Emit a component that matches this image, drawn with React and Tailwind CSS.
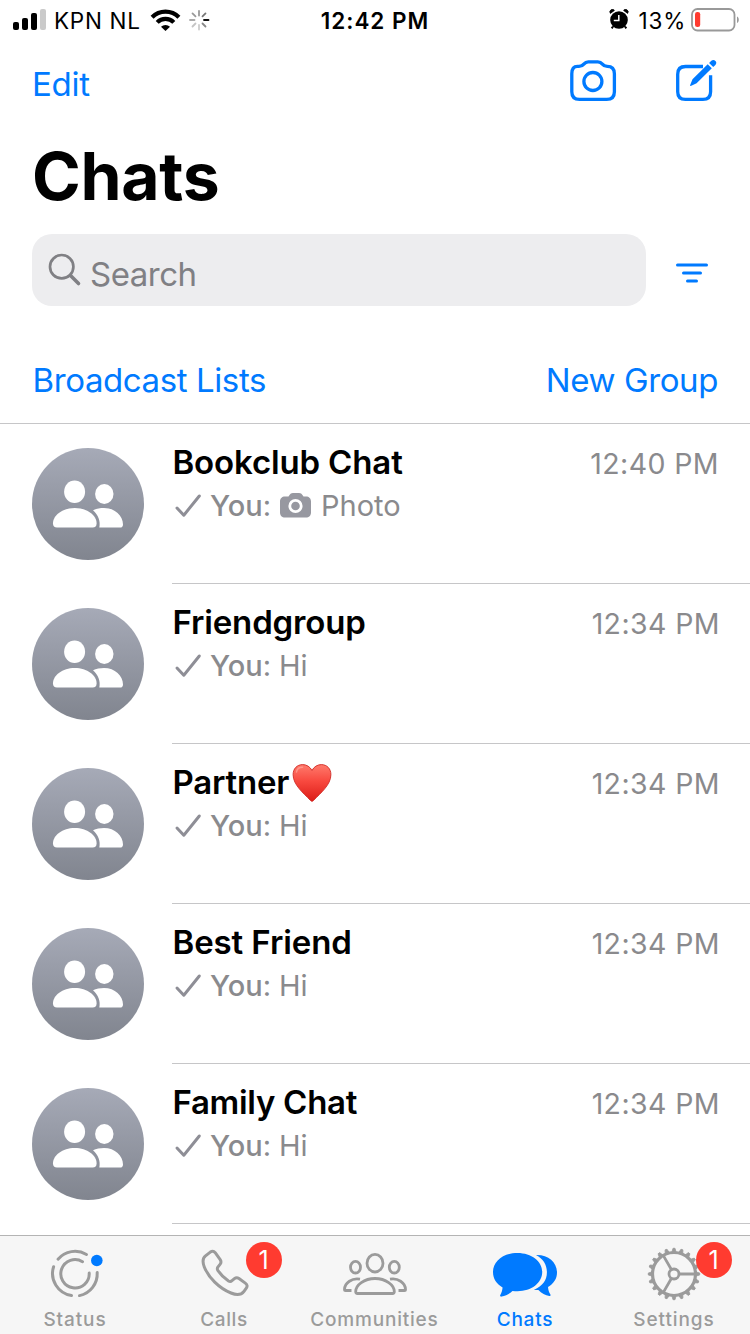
import React from "react";

const gray = "#9b9b9b";
const blue = "#007aff";

function StatusBar() {
  return (
    <div className="flex h-[40px] items-center pl-[12px] pr-[11px] text-[22.5px] leading-[41px] text-black">
      <div className="flex w-[280px] items-center">
        <svg className="shrink-0" width="34" height="22" viewBox="12 9 34 22">
          <rect x="13" y="22" width="6" height="8" rx="2" />
          <rect x="22" y="18" width="6" height="12" rx="2" />
          <rect x="31" y="13" width="6" height="17" rx="2" />
          <rect x="40" y="9" width="6" height="21" rx="2" fill="#cacaca" />
        </svg>
        <span className="ml-[8px] w-[89px] whitespace-nowrap tracking-[0.7px]">KPN NL</span>
        <svg className="ml-[7px] shrink-0" width="60" height="24" viewBox="150 8 60 24">
          <g fill="none" stroke="#000" strokeWidth="4.2">
            <path d="M152.100 17.200A18.800 18.800 0 0 1 178.900 17.200" />
            <path d="M157.200 22.400A11.600 11.600 0 0 1 173.800 22.400" />
          </g>
          <path d="M161 26.800a6.600 6.600 0 0 1 9 0l-4.500 4.200z" />
          <g strokeWidth="1.8" strokeLinecap="round">
            <path d="M199 11v4.500" stroke="#999" />
            <path d="M205.500 13.400l-3 3" stroke="#777" />
            <path d="M204 20h4.500" stroke="#111" />
            <path d="M202.500 23.500l3 3" stroke="#888" />
            <path d="M199 25v4.500" stroke="#ccc" />
            <path d="M192.500 26.500l3-3" stroke="#c4c4c4" />
            <path d="M190 20h4.500" stroke="#aaa" />
            <path d="M192.500 13.400l3 3" stroke="#999" />
          </g>
        </svg>
      </div>
      <span className="w-[166px] text-center font-semibold tracking-[1px]">12:42 PM</span>
      <div className="flex flex-1 items-center justify-end">
        <svg className="shrink-0" width="20" height="22" viewBox="609 9 20 22">
          <circle cx="619" cy="20" r="8.800" />
          <path d="M610.400 13.400a2.400 2.400 0 0 1 4-3zM627.600 13.400a2.400 2.400 0 0 0-4-3z" stroke="#000" strokeWidth="0.800" />
          <path d="M613 26.500l-1.300 1.800M625 26.500l1.300 1.800" stroke="#000" strokeWidth="2" />
          <path d="M618.800 15v5.500h-5" fill="none" stroke="#fff" strokeWidth="1.500" />
        </svg>
        <span className="ml-[9.500px] w-[48.500px] whitespace-nowrap tracking-[0.8px]">13%</span>
        <svg className="ml-[4px] shrink-0" width="48" height="24" viewBox="691 8 48 24">
          <rect x="692" y="9" width="42.500" height="21.500" rx="5.500" fill="none" stroke="#999" strokeWidth="1.800" />
          <path d="M737 16.500c2.400 1.200 2.400 5.300 0 6.500z" fill="#999" />
          <rect x="695" y="12" width="5.200" height="15" rx="2.300" fill="#ff3b30" />
        </svg>
      </div>
    </div>
  );
}

function NavIcons() {
  return (
    <svg width="150" height="46" viewBox="568 58 150 46" fill="none" stroke={blue} strokeWidth="3.3">
      <path d="M577.500 66.300H579c2.200 0 3.600-.7 4.800-2.200 1.300-1.600 2.500-2.300 4.500-2.300h9.600c2 0 3.200.7 4.500 2.300 1.200 1.500 2.600 2.200 4.800 2.200 4.700 0 7.200 2.800 7.200 7.400v18c0 5-2.700 7.700-7.700 7.700h-27.200c-5 0-7.700-2.700-7.700-7.700v-18c0-4.600 2-7.400 5.700-7.400z" />
      <circle cx="592.900" cy="81.500" r="9" />
      <path d="M703 66.500h-17.500c-5 0-7.800 2.700-7.800 7.700v17.500c0 5 2.700 7.700 7.700 7.700h17.500c5 0 7.700-2.700 7.700-7.700v-16.500" />
      <path fill={blue} stroke="none" d="M690.200 85l2.300-5.800 15.200-15 4.100 4.100-15.200 15-5.300 2.500c-.9.300-1.400-.1-1.100-.8zM709.100 63l2.200-2.200c2.800-2.700 6.800 1.300 4.100 4.100l-2.200 2.200z" />
    </svg>
  );
}

function Avatar() {
  return (
    <div className="mt-[24px] ml-[32px] size-[112px] shrink-0 rounded-full bg-linear-to-b from-[#a6aab7] to-[#81858f]">
      <svg width="112" height="112" viewBox="32 448 112 112" fill="#fff">
        <ellipse cx="74.600" cy="491.800" rx="10.500" ry="11.300" />
        <ellipse cx="104.300" cy="494" rx="9.200" ry="10" />
        <path d="M93 510.300c3.300-1.600 7-2.300 11-2.300 11 0 19 7.800 19 16.500 0 2-1 3.100-3 3.100H99.300c1.500-6.500-1.200-12.800-6.300-17.300z" />
        <path d="M53 523.300c0-8 9.300-15.300 21.800-15.300s21.800 7.300 21.800 15.300c0 2.900-1.300 4.300-4 4.300H57c-2.700 0-4-1.400-4-4.300z" />
      </svg>
    </div>
  );
}

function Heart() {
  return (
    <svg className="mt-[1px] ml-[3px] shrink-0" width="40" height="40" viewBox="0 0 40 40">
      <defs>
        <linearGradient id="heart" x1="0" y1="0" x2="0" y2="1">
          <stop offset="0" stopColor="#ff7a6c" />
          <stop offset="0.45" stopColor="#f8493f" />
          <stop offset="1" stopColor="#dc1c17" />
        </linearGradient>
      </defs>
      <path d="M20 7.500C21.800 3.800 25.500 1.600 29.300 1.600c5.800 0 9.600 4.200 9.600 10C38.900 22 28.500 30 21.500 37.500c-1 1.100-2 1.100-3 0C11.500 30 1.100 22 1.100 11.600c0-5.800 3.800-10 9.600-10C14.500 1.600 18.200 3.800 20 7.500z" fill="url(#heart)" stroke="#cf2a25" strokeWidth="0.900" />
      <path d="M4.500 9C5 6 7.500 4.200 10.500 4.200" fill="none" stroke="#ffb0a5" strokeWidth="1.500" strokeLinecap="round" opacity="0.6" />
    </svg>
  );
}

function ChatRow({ name, time, nameClass, heart, photo }) {
  return (
    <div className="flex h-[160px] shrink-0">
      <Avatar />
      <div className="ml-[28px] flex flex-1 border-b border-[#c6c6c8] pt-[18px]">
        <div className="flex-1">
          <div className="flex h-[40px] items-center pl-[0.500px]">
            <span className={"whitespace-nowrap text-[33px] leading-[40px] font-semibold text-black " + nameClass}>{name}</span>
            {heart && <Heart />}
          </div>
          <div className="mt-[2px] flex h-[44px] items-center text-[29px] leading-[44px] text-[#8a8a8d]">
            <svg className="ml-[2px] shrink-0" width="28" height="26" viewBox="174 493 28 26">
              <path d="M177 508l6.800 7.200L199.300 496" fill="none" stroke="#8e8e96" strokeWidth="3" strokeLinecap="round" strokeLinejoin="round" />
            </svg>
            <span className="ml-[8px] w-[69px] whitespace-nowrap"><span className="font-medium">You</span>:</span>
            {photo && (
              <svg className="mr-[10px] ml-[1px] shrink-0" width="31" height="26" viewBox="280 493 31 26">
                <path d="M285 496.500h3.500c1.500-2.500 2.500-3.500 4.500-3.500h6c2 0 3 1 4.500 3.500h2.500c3 0 5 2 5 5v11c0 3-2 5-5 5h-21c-3 0-5-2-5-5v-11c0-3 2-5 5-5z" fill="#9798a0" />
                <circle cx="295.500" cy="506" r="5.700" fill="#9798a0" stroke="#fff" strokeWidth="2.800" />
              </svg>
            )}
            <span className="whitespace-nowrap">{photo ? "Photo" : "Hi"}</span>
          </div>
        </div>
        <span className={"mt-[1px] h-[40px] whitespace-nowrap text-[28.5px] leading-[41px] tracking-[0.4px] text-[#8a8a8d] " + (photo ? "mr-[31px]" : "mr-[30px]")}>{time}</span>
      </div>
    </div>
  );
}

function Badge() {
  return (
    <span className="absolute top-[6px] left-[96px] flex size-[36px] items-center justify-center rounded-full bg-[#ff3b30] pr-[1px] text-[25px] leading-[36px] text-white">1</span>
  );
}

function Tab({ label, children, badge, active, labelClass }) {
  return (
    <div className={"relative flex w-[150px] shrink-0 flex-col items-center " + (active ? "text-[#007aff]" : "text-[#9b9b9b]")}>
      <svg width="150" height="72" viewBox="0 1236 150 72" fill="none">{children}</svg>
      <span className={"mt-[1px] whitespace-nowrap text-[19px] leading-[22px] font-medium " + labelClass}>{label}</span>
      {badge && <Badge />}
    </div>
  );
}

const teeth = Array.from({ length: 20 }, (_, i) => i * 18);

function TabBar() {
  return (
    <div className="flex h-[99px] shrink-0 border-t border-[#b4b4b4] bg-[#f6f6f6]">
      <Tab label="Status" labelClass="tracking-[0.9px]">
        <g stroke={gray} strokeWidth="3" strokeLinecap="round">
          <path d="M58 1259.200A22.300 22.300 0 0 1 86.500 1254.500" />
          <path d="M53.600 1266.800A22.300 22.300 0 0 0 71.500 1295.600" />
          <path d="M79.500 1295.600A22.300 22.300 0 0 0 97.200 1272.500" />
          <path d="M82.500 1261.700A14.200 14.200 0 1 0 89.200 1273" />
        </g>
        <circle cx="96.800" cy="1260.500" r="5.800" fill={blue} />
      </Tab>
      <Tab label="Calls" labelClass="mr-[2px] tracking-[0.6px]" badge>
        <path transform="translate(1.200 0.400)" d="M54.300 1255.500l4.800-3.800c1.800-1.200 3.600-1 4.900.6l5 7c1 1.500 1 3.200-.2 4.700l-2 2.500c-.8 1.100-.9 2.200-.2 3.400 3 4.500 6.500 7.900 10.700 10.700 1.200.7 2.500.6 3.500-.3l2.400-2c1.500-1.200 3-1.200 4.600-.2l6.300 4.600c2 1.400 2.300 3.200 1 5l-2.300 3.200c-2.700 3.600-7.500 4-13 1.700-12-4.800-22.500-15.500-26.700-26-1.900-4.900-1.400-9 1.200-11.100z" stroke={gray} strokeWidth="3" strokeLinejoin="round" />
      </Tab>
      <Tab label="Communities" labelClass="mr-[1px] tracking-[0.8px]">
        <g stroke={gray} strokeWidth="2.800">
          <ellipse cx="75" cy="1263.200" rx="8" ry="8.800" />
          <ellipse cx="55.500" cy="1267.200" rx="5" ry="5.800" />
          <ellipse cx="94.300" cy="1267.200" rx="5" ry="5.800" />
          <path d="M57.500 1293.500c-1.200 0-1.800-.8-1.800-2 0-6.500 8.500-13 19.300-13s19.300 6.500 19.300 13c0 1.200-.6 2-1.800 2z" />
          <path d="M60 1279.200c-8-1.500-15.200 3.500-15.500 10.200 0 .8.300 1.100 1.100 1.100H51.500M90 1279.200c8-1.500 15.200 3.500 15.500 10.200 0 .8-.3 1.100-1.100 1.100H98.500" />
        </g>
      </Tab>
      <Tab label="Chats" active labelClass="tracking-[0.8px]">
        <path d="M87 1255c11.500 0 20 7.500 20 17.500 0 6.200-3.300 11-9 14.500.2 3 1.200 5.500 2.400 7.500.5.900 0 1.600-1 1.400-4-.7-8-2.700-11-5.900-1.500.2-3 .1-4.500-.1 9-4.300 13-10 13-17.500 0-7.600-3.700-13.700-10.900-17.400z" fill={blue} />
        <path d="M67.500 1253c14 0 24.700 8.300 24.700 19 0 10.800-10.700 19.200-24.700 19.200-1.800 0-3.500-.1-5-.3-2.600 2.500-6.500 4.700-10.800 5.700-1.200.3-2-.5-1.400-1.500 1.300-2.400 2-4.700 2.300-7.600C46.500 1284 43 1278.800 43 1272c0-10.700 10.500-19 24.500-19z" fill={blue} />
      </Tab>
      <Tab label="Settings" labelClass="mr-[2px] tracking-[0.9px]" badge>
        <g stroke={gray}>
          <circle cx="74" cy="1274" r="21.500" strokeWidth="3.200" />
          <circle cx="74" cy="1274" r="5" strokeWidth="2.800" />
          <path d="M79 1274h16.500M71.500 1269.700l-8.300-14.300M71.500 1278.300l-8.300 14.300" strokeWidth="2.800" />
          {teeth.map((a) => (
            <path key={a} d="M95.500 1271.800l4.200 1.200v2l-4.200 1.200z" fill={gray} strokeWidth="0.800" transform={`rotate(${a} 74 1274)`} />
          ))}
        </g>
      </Tab>
    </div>
  );
}

const chats = [
  { name: "Bookclub Chat", time: "12:40 PM", nameClass: "tracking-[-0.15px]", photo: true },
  { name: "Friendgroup", time: "12:34 PM", nameClass: "tracking-[-0.15px]" },
  { name: "Partner", time: "12:34 PM", nameClass: "tracking-[-0.2px]", heart: true },
  { name: "Best Friend", time: "12:34 PM", nameClass: "tracking-[-0.1px]" },
  { name: "Family Chat", time: "12:34 PM", nameClass: "tracking-[-0.3px]" },
];

export default function App() {
  return (
    <div className="flex h-[1334px] w-[750px] flex-col overflow-hidden bg-white font-['Inter',sans-serif]">
      <StatusBar />
      <div className="flex h-[88px] shrink-0 items-center justify-between pr-[32px] pl-[32px]">
        <span className="text-[33px] leading-[40px] tracking-[-0.3px] text-[#007aff]">Edit</span>
        <div className="mt-[-6px]"><NavIcons /></div>
      </div>
      <h1 className="h-[96px] shrink-0 pl-[32px] text-[66px] leading-[96px] font-bold tracking-[-0.3px] text-black">Chats</h1>
      <div className="mt-[10px] flex h-[72px] shrink-0 items-center pl-[32px]">
        <div className="flex h-[72px] w-[614px] items-center rounded-[20px] bg-[#ededef] pl-[16px]">
          <svg className="shrink-0" width="34" height="34" viewBox="48 253 34 34" fill="none" stroke="#808084" strokeWidth="2.700">
            <circle cx="61.700" cy="266.700" r="11.700" />
            <path d="M70.500 275.500l8 8" strokeWidth="3.600" strokeLinecap="round" />
          </svg>
          <span className="mt-[8px] ml-[8px] text-[33px] leading-[40px] tracking-[-0.5px] text-[#808084]">Search</span>
        </div>
        <svg className="mt-[5px] ml-[28px]" width="36" height="26" viewBox="674 259 36 26" stroke={blue} strokeWidth="3" strokeLinecap="round">
          <path d="M677.500 264h29M683.500 272h17M687.500 280h9" />
        </svg>
      </div>
      <div className="flex h-[118px] shrink-0 items-start justify-between border-b border-[#c6c6c8] pt-[54px] pr-[32px] pl-[32.500px] text-[33px] leading-[40px] tracking-[-0.400px] text-[#007aff]">
        <span>Broadcast Lists</span>
        <span>New Group</span>
      </div>
      <div className="min-h-0 flex-1 overflow-hidden">
        {chats.map((c) => (
          <ChatRow key={c.name} {...c} />
        ))}
      </div>
      <TabBar />
    </div>
  );
}
